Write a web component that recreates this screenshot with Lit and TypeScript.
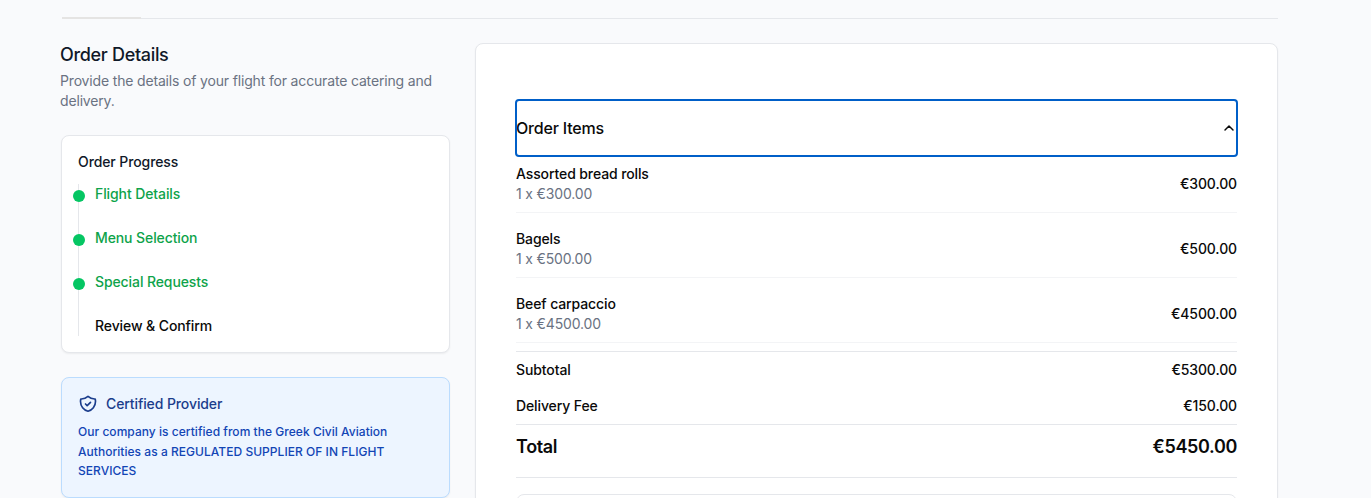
import { LitElement, html, css } from "lit";
import { customElement } from "lit/decorators.js";

interface OrderItem {
  name: string;
  qty: number;
  price: string;
}

const STEPS = [
  { label: "Flight Details", done: true },
  { label: "Menu Selection", done: true },
  { label: "Special Requests", done: true },
  { label: "Review & Confirm", done: false },
];

const ITEMS: OrderItem[] = [
  { name: "Assorted bread rolls", qty: 1, price: "€300.00" },
  { name: "Bagels", qty: 1, price: "€500.00" },
  { name: "Beef carpaccio", qty: 1, price: "€4500.00" },
];

@customElement("order-sidebar")
export class OrderSidebar extends LitElement {
  static styles = css`
    :host {
      display: block;
      font-size: 14px;
      line-height: 20px;
      letter-spacing: -0.1px;
    }
    h2, h3, h4, p, ul {
      margin: 0;
      padding: 0;
    }
    .title {
      font-size: 18px;
      line-height: 24px;
      font-weight: 500;
      letter-spacing: -0.32px;
      color: #101828;
      margin-left: -1px;
    }
    .lead {
      margin: 4px 0 24px -1px;
      letter-spacing: -0.165px;
      color: #6a7282;
    }
    .card {
      box-sizing: border-box;
      border: 1px solid #e5e7eb;
      border-radius: 8px;
      background: #fff;
      padding: 16px;
      box-shadow: 0 1px 2px rgba(0, 0, 0, 0.06);
    }
    .heading {
      font-size: 14px;
      font-weight: 500;
      color: #101828;
    }
    .steps {
      list-style: none;
      margin-top: 12px;
      border-left: 1px solid #e5e7eb;
      display: flex;
      flex-direction: column;
      gap: 24px;
    }
    .step {
      position: relative;
      padding-left: 16px;
      font-weight: 500;
      color: #0a0a0a;
    }
    .done {
      color: #0ea34a;
    }
    .done::before {
      content: "";
      position: absolute;
      left: -6px;
      top: 6px;
      width: 12px;
      height: 12px;
      border-radius: 50%;
      background: #05c663;
    }
    .certified {
      margin-top: 24px;
      background: #edf5ff;
      border-color: #bbdcfe;
    }
    .cert-head {
      display: flex;
      align-items: center;
      gap: 8px;
      color: #1b3d8c;
      font-size: 14px;
      font-weight: 500;
    }
    .cert-head svg {
      display: block;
    }
    .cert-text {
      margin-top: 8px;
      font-size: 12px;
      line-height: 19.5px;
      font-weight: 500;
      letter-spacing: 0.035px;
      color: #1245b5;
    }
  `;

  render() {
    return html`
      <h2 class="title">Order Details</h2>
      <p class="lead">Provide the details of your flight for accurate catering and delivery.</p>
      <section class="card">
        <h3 class="heading">Order Progress</h3>
        <ul class="steps">
          ${STEPS.map((s) => html`<li class="step ${s.done ? "done" : ""}">${s.label}</li>`)}
        </ul>
      </section>
      <section class="card certified">
        <h4 class="cert-head">
          <svg width="20" height="20" viewBox="0 0 24 24" fill="none" stroke="currentColor" stroke-width="2" stroke-linecap="round" stroke-linejoin="round">
            <path d="M9 12l2 2 4-4m5.618-4.016A11.955 11.955 0 0112 2.944a11.955 11.955 0 01-8.618 3.040A12.02 12.02 0 003 9c0 5.591 3.824 10.290 9 11.622 5.176-1.332 9-6.030 9-11.622 0-1.042-.133-2.052-.382-3.016z" />
          </svg>
          <span>Certified Provider</span>
        </h4>
        <p class="cert-text">
          Our company is certified from the Greek Civil Aviation Authorities as a REGULATED SUPPLIER OF IN FLIGHT SERVICES
        </p>
      </section>
    `;
  }
}

@customElement("order-summary")
export class OrderSummary extends LitElement {
  static styles = css`
    :host {
      display: block;
      box-sizing: border-box;
      border: 1px solid #e5e7eb;
      border-radius: 8px;
      background: #fff;
      padding: 56px 40px 40px;
      box-shadow: 0 1px 2px rgba(0, 0, 0, 0.05);
      font-size: 14px;
      line-height: 20px;
      font-weight: 500;
      letter-spacing: -0.11px;
      color: #0a0a0a;
    }
    .toggle {
      display: flex;
      width: 100%;
      height: 56px;
      align-items: center;
      justify-content: space-between;
      padding: 0;
      border: 0;
      background: none;
      color: inherit;
      font: 500 16px/24px Inter, sans-serif;
      letter-spacing: -0.18px;
      outline: 2px solid #005fc8;
      outline-offset: -1px;
      border-radius: 3px;
    }
    .toggle svg {
      display: block;
    }
    .items {
      display: flex;
      flex-direction: column;
      gap: 16px;
      padding: 8px 0;
    }
    .row {
      display: flex;
      align-items: center;
      justify-content: space-between;
    }
    .item {
      padding-bottom: 8px;
      border-bottom: 1px solid #f3f4f6;
    }
    .qty {
      color: #6a7282;
      font-weight: 400;
      letter-spacing: -0.16px;
    }
    .totals {
      display: flex;
      flex-direction: column;
      gap: 16px;
      border-top: 1px solid #e5e7eb;
      padding: 8px 0;
    }
    .total {
      border-top: 1px solid #e5e7eb;
      border-bottom: 1px solid #e5e7eb;
      padding: 8px 0 16px;
      font-size: 18px;
      line-height: 28px;
      font-weight: 600;
      letter-spacing: -0.35px;
    }
    .panel {
      margin-top: 16px;
      height: 80px;
      border: 1px solid #e5e7eb;
      border-radius: 8px;
    }
  `;

  render() {
    return html`
      <button class="toggle">
        <span>Order Items</span>
        <svg width="16" height="16" viewBox="0 0 24 24" fill="none" stroke="currentColor" stroke-width="2.2" stroke-linecap="round" stroke-linejoin="round">
          <path d="m18 15-6-6-6 6" />
        </svg>
      </button>
      <div class="items">
        ${ITEMS.map(
          (i) => html`
            <div class="row item">
              <div>
                <div>${i.name}</div>
                <div class="qty">${i.qty} x ${i.price}</div>
              </div>
              <span>${i.price}</span>
            </div>
          `
        )}
      </div>
      <div class="totals">
        <div class="row"><span>Subtotal</span><span>€5300.00</span></div>
        <div class="row"><span>Delivery Fee</span><span>€150.00</span></div>
      </div>
      <div class="row total"><span>Total</span><span>€5450.00</span></div>
      <div class="panel"></div>
    `;
  }
}

@customElement("app-root")
export class AppRoot extends LitElement {
  static styles = css`
    :host {
      display: block;
      box-sizing: border-box;
      height: 498px;
      overflow: hidden;
      background: #f9fafc;
      font-family: Inter, sans-serif;
    }
    .container {
      width: 1217px;
      padding: 17px 0 0 61px;
    }
    .tabs {
      display: flex;
      align-items: flex-end;
      height: 2px;
      margin: 0 0 24px 1px;
    }
    .active {
      width: 79px;
      height: 2px;
      background: #e5e4e3;
    }
    .rest {
      flex: 1;
      height: 1px;
      background: #e5e7eb;
    }
    .grid {
      display: grid;
      grid-template-columns: 389px minmax(0, 1fr);
      gap: 25px;
      align-items: start;
    }
  `;

  render() {
    return html`
      <div class="container">
        <div class="tabs"><div class="active"></div><div class="rest"></div></div>
        <div class="grid">
          <order-sidebar></order-sidebar>
          <order-summary></order-summary>
        </div>
      </div>
    `;
  }
}
